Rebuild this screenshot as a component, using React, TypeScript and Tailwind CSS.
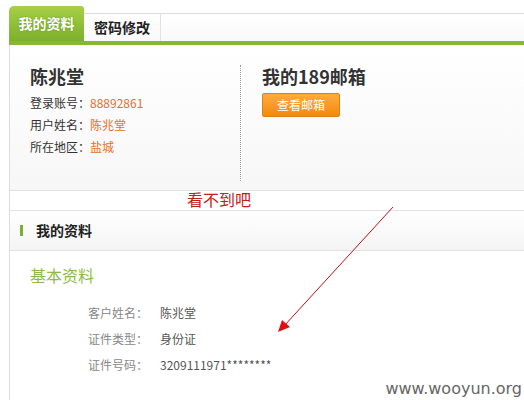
import React from 'react'

const font = { fontFamily: '"Noto Sans CJK SC", "Noto Sans", sans-serif' }

type Row = { label: string; value: string }

const accountRows: Row[] = [
    { label: '登录账号：', value: '88892861' },
    { label: '用户姓名：', value: '陈兆堂' },
    { label: '所在地区：', value: '盐城' },
]

const basicRows: Row[] = [
    { label: '客户姓名：', value: '陈兆堂' },
    { label: '证件类型：', value: '身份证' },
    { label: '证件号码：', value: '3209111971********' },
]

export default function App() {
    return (
        <div
            className="relative w-[524px] h-[400px] overflow-hidden bg-white text-[#333]"
            style={font}
        >
            {/* tabs */}
            <div className="flex h-[35px] mt-[6px] ml-[9px]">
                <div className="flex w-[75px] items-center justify-center rounded-tl-[5px] rounded-tr-[3px] bg-gradient-to-b from-[#a6d046] to-[#7cb02c] text-[14px] font-bold text-white [text-shadow:0_0_2px_rgba(80,120,20,0.6)]">
                    我的资料
                </div>
                <div className="flex flex-1 mt-[7px] border-t border-[#dedede] bg-gradient-to-b from-white to-[#f9f9f9]">
                    <div className="flex w-[77px] items-center justify-center border-r border-[#e2e2e2] text-[14px] font-bold text-[#222]">
                        密码修改
                    </div>
                </div>
            </div>
            <div className="ml-[9px] h-[4px] bg-[#86b735]" />

            {/* body */}
            <div className="ml-[9px] h-[355px] border-l border-[#dcdcdc]">
                {/* account card */}
                <div className="flex h-[146px] pt-[20px] pb-[9px] border-b border-[#e2e2e2] bg-gradient-to-b from-white to-[#f7f7f7]">
                    <div className="w-[231px] pl-[20px] border-r border-dotted border-[#999]">
                        <div className="text-[18px] leading-[22px] font-bold text-[#333]">陈兆堂</div>
                        <div className="mt-[5px]">
                            {accountRows.map(r => (
                                <div key={r.label} className="flex text-[12px] leading-[22px]">
                                    <span className="text-[#333]">{r.label}</span>
                                    <span className="text-[#e0702a]">{r.value}</span>
                                </div>
                            ))}
                        </div>
                    </div>
                    <div className="pl-[21px]">
                        <div className="text-[18px] leading-[22px] font-bold text-[#333]">我的189邮箱</div>
                        <button className="mt-[6px] flex h-[24px] w-[78px] items-center justify-center rounded-[2px] border border-[#e27f12] bg-gradient-to-b from-[#ffab3a] to-[#f08a0e] text-[12px] text-white">
                            查看邮箱
                        </button>
                    </div>
                </div>

                <div className="h-[20px] border-b border-[#e2e2e2]" />

                {/* section header */}
                <div className="flex h-[40px] items-center border-b border-[#e2e2e2] bg-gradient-to-b from-white to-[#f4f4f4] pl-[10px]">
                    <span className="h-[11px] w-[3px] bg-[#7dae2c]" />
                    <span className="ml-[13px] text-[14px] font-bold text-[#222]">我的资料</span>
                </div>

                <div className="pl-[20px] pt-[14px] text-[16px] leading-[20px] text-[#8cba48]">基本资料</div>

                <div className="mt-[15px] pl-[78px]">
                    {basicRows.map(r => (
                        <div key={r.label} className="flex text-[12px] leading-[26px]">
                            <span className="w-[72px] text-[#888]">{r.label}</span>
                            <span className="text-[#555]">{r.value}</span>
                        </div>
                    ))}
                </div>
            </div>

            {/* annotation */}
            <div className="absolute left-[187px] top-[188px] text-[16px] leading-[22px] text-[#c0201c]">看不到吧</div>
            <svg className="absolute left-0 top-0" width="524" height="400" viewBox="0 0 524 400">
                <line x1="393" y1="207" x2="284" y2="326" stroke="#b8121c" strokeWidth="1" />
                <polygon points="278,332 282,320 290,327" fill="#e01010" />
            </svg>
            <div
                className="absolute right-[2px] bottom-[1px] text-[16px] leading-[20px] text-[#666]"
                style={{ fontFamily: '"DejaVu Sans", Verdana, sans-serif' }}
            >
                www.wooyun.org
            </div>
        </div>
    )
}
